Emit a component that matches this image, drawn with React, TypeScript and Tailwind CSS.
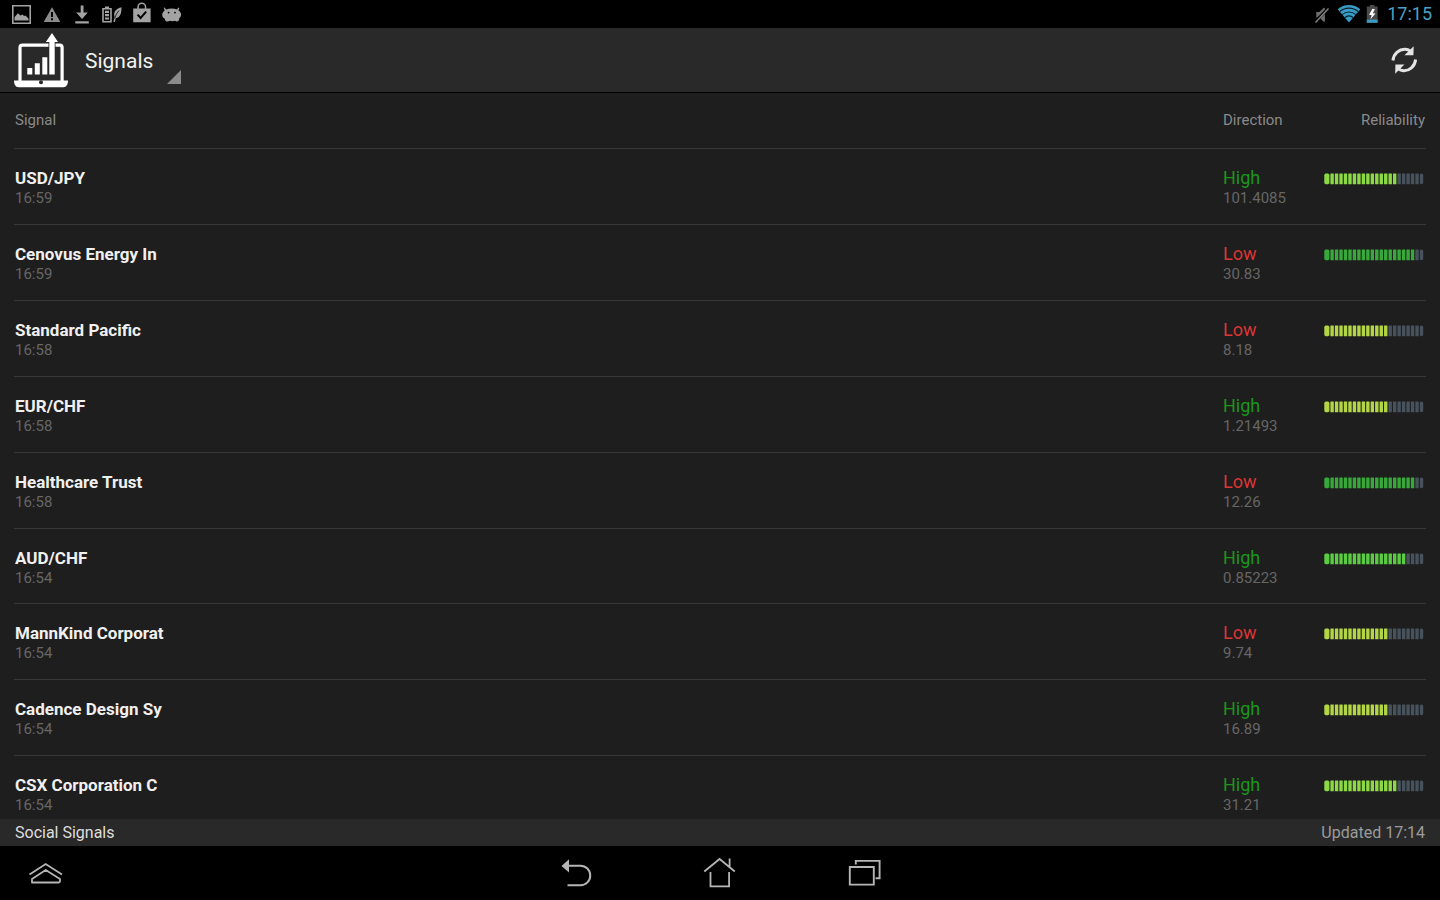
type Tone = 'yellow' | 'lime' | 'bright' | 'green';

type Signal = {
  name: string;
  time: string;
  direction: 'High' | 'Low';
  price: string;
  level: number;
  tone: Tone;
};

const SIGNALS: Signal[] = [
  { name: 'USD/JPY', time: '16:59', direction: 'High', price: '101.4085', level: 16, tone: 'lime' },
  { name: 'Cenovus Energy In', time: '16:59', direction: 'Low', price: '30.83', level: 20, tone: 'green' },
  { name: 'Standard Pacific', time: '16:58', direction: 'Low', price: '8.18', level: 14, tone: 'yellow' },
  { name: 'EUR/CHF', time: '16:58', direction: 'High', price: '1.21493', level: 14, tone: 'yellow' },
  { name: 'Healthcare Trust', time: '16:58', direction: 'Low', price: '12.26', level: 20, tone: 'green' },
  { name: 'AUD/CHF', time: '16:54', direction: 'High', price: '0.85223', level: 18, tone: 'bright' },
  { name: 'MannKind Corporat', time: '16:54', direction: 'Low', price: '9.74', level: 14, tone: 'yellow' },
  { name: 'Cadence Design Sy', time: '16:54', direction: 'High', price: '16.89', level: 14, tone: 'yellow' },
  { name: 'CSX Corporation C', time: '16:54', direction: 'High', price: '31.21', level: 16, tone: 'lime' },
];

const TONES: Record<Tone, string> = {
  yellow: 'fill-[#b4d545]',
  lime: 'fill-[#8cd945]',
  bright: 'fill-[#5acb42]',
  green: 'fill-[#38a83b]',
};

const SEGMENTS = 22;

function Meter({ level, tone }: { level: number; tone: Tone }) {
  return (
    <svg
      className="ml-auto block h-3 w-[101px]"
      viewBox="0 0 101 12"
      role="img"
      aria-label={`Reliability ${level} of ${SEGMENTS}`}
    >
      {Array.from({ length: SEGMENTS }, (_, i) => {
        const edge = i === 0 || i === SEGMENTS - 1;
        const x = i === 0 ? 0.3 : 6.4 + (i - 1) * 4.47;
        return (
          <rect
            key={i}
            x={x}
            y={0.6}
            width={i === 0 ? 5.1 : 3.4}
            height={10.6}
            rx={edge ? 1.6 : 0.3}
            className={i < level ? TONES[tone] : 'fill-[#47525c]'}
          />
        );
      })}
    </svg>
  );
}

function StatusBar() {
  return (
    <div className="flex h-7 shrink-0 items-center justify-between bg-black px-2">
      <svg className="h-7 w-[180px] fill-[#a3a3a3]" viewBox="8 0 180 28" aria-hidden="true">
        <path fillRule="evenodd" d="M12 5h19v19H12zM13.6 6.6v15.8h15.8V6.6z" />
        <path d="M14.5 20.5v-3.2l3.4-4 2.6 2.2 2-1 1.6 1.6 1.4-.6 3 3v2z" />
        <path fillRule="evenodd" d="M52 7.2 60.3 22H43.7zM51 12v5h2v-5zM51 18.3v2h2v-2z" opacity=".85" />
        <path d="M80.7 5.5h2.8v7h4.3L82.1 19l-5.9-6.5h4.5zM75.3 21.2h13.5v2.3H75.3z" />
        <path fillRule="evenodd" d="M105 6.600h4V8h2.800v14.600h-9.600V8h2.800zM103.800 9.600V21h6.400V9.600z" />
        <path d="M105 10.800h4v2.100h-4zM105 14.100h4v2.100h-4zM105 17.400h4v2.100h-4z" />
        <path d="M121.500 7.300c-5 1-8.500 4.600-7 9.600l-1 5h1.400l.9-3.700c4.800-.8 5.700-5.200 5.700-10.900z" />
        <path d="M119 10.500c-2 2.400-3.300 4.500-4.300 8" fill="none" stroke="#000" strokeWidth=".8" />
        <path fillRule="evenodd" d="M133.200 8.400h4.100V7a4.500 4.500 0 0 1 9 0v1.400h4.300v13.800h-17.400zM138.800 8.400h6V7a3 3 0 0 0-6 0z" />
        <path d="m137.600 14.600 3 3.300 5.600-6.300" fill="none" stroke="#000" strokeWidth="2" />
        <path d="M162.200 15c0-2.200 1.300-3.600 2.500-4.600l-1-2.600.9-.4 1.600 2.200c3.300-1.400 7.800-1.400 10.800-.1l1.400-1.900.9.400-.9 2.400c1.800 1 2.600 2.400 2.700 4.100 0 2-.8 3-1.800 3.400.3 3-2 4.400-4.300 2.900-1.500.5-3.300.5-5 0-3 1.700-5.200.3-5.300-2.400-1.600-.4-2.400-1.400-2.500-3.400z" />
        <circle cx="168.600" cy="12.600" r=".9" fill="#000" />
        <circle cx="175" cy="12.600" r=".9" fill="#000" />
      </svg>
      <div className="flex items-center gap-2">
        <svg className="h-7 w-[66px]" viewBox="1314 0 66 28" aria-hidden="true">
          <path d="M1317.300 12h3l4.600-4.300 1 .2v13.600h-1.600l-3.800-4h-3.200z" fill="#6e6e6e" />
          <path d="m1316 22 13.600-14" stroke="#000" strokeWidth="3" />
          <path d="m1316.500 22.500 13-14" stroke="#8a8a8a" strokeWidth="1.300" />
          <path d="M1338.700 9.200a17 17 0 0 1 22.600 0L1350 22.600z" fill="#3a9cc4" />
          <path
            d="M1340.700 11.700a14 14 0 0 1 18.600 0M1343.200 14.600a10.200 10.200 0 0 1 13.600 0M1345.800 17.600a6 6 0 0 1 8.400 0"
            fill="none"
            stroke="#04222e"
            strokeWidth="1.100"
          />
          <path d="M1371 5h4.600v1.600h3V22.800h-10.800V6.600h3.200z" fill="#4a4a4a" />
          <path d="M1367.800 19.600h10.800v3.200h-10.800z" fill="#3a9cc4" />
          <path d="m1373.400 8.800-3.300 6 2.600.5-1.400 4.300 5.200-6-2.700-.4 2.100-4z" fill="#fff" />
        </svg>
        <time className="text-lg leading-7 text-[#4da0c4]">17:15</time>
      </div>
    </div>
  );
}

function AppBar() {
  return (
    <header className="flex h-[65px] shrink-0 items-center justify-between border-b border-black bg-[#292929] pr-[21px] pl-[13px]">
      <div className="flex h-full items-center gap-4">
        <svg className="h-16 w-14" viewBox="13 28 56 64" aria-hidden="true">
          <path
            d="M20 81V47.500a2.400 2.400 0 0 1 2.400-2.400H48.500M55.500 45.100H59.700a2.400 2.400 0 0 1 2.400 2.400V81"
            fill="none"
            stroke="#fff"
            strokeWidth="3.200"
          />
          <path d="M27.300 68h5v6.500h-5zM34.800 63.300h5v11.200h-5zM42.300 57.300h5v17.200h-5z" fill="#fff" />
          <path d="M49.300 74.500V42H45.800L52 33l6 9h-3.300v32.500z" fill="#fff" />
          <path d="M14 80.600h54c0 4-1.700 6.700-4.600 6.700H18.600C15.700 87.300 14 84.600 14 80.600z" fill="#fff" />
          <circle cx="41" cy="82.300" r="2" fill="#292929" />
        </svg>
        <button
          type="button"
          aria-haspopup="menu"
          className="flex h-full w-24 items-end justify-between pb-2 text-[21px] text-[#f2f2f2]"
        >
          <span className="self-center pt-3">Signals</span>
          <svg className="h-[14px] w-[14px] shrink-0" viewBox="0 0 14 14" aria-hidden="true">
            <path d="M14 0v14H0z" fill="#8b8b8b" />
          </svg>
        </button>
      </div>
      <button type="button" aria-label="Refresh">
        <svg className="h-[30px] w-[30px]" viewBox="1389 45 30 30" aria-hidden="true">
          <path
            d="M1393 60.500c.6-7 6.400-11.500 12.200-11.200 2.200.1 3.800.8 5.200 1.800M1415.600 59.500c-.6 7-6.400 11.500-12.200 11.200-2.200-.1-3.800-.8-5.200-1.800"
            fill="none"
            stroke="#e4e4e4"
            strokeWidth="3"
          />
          <path d="m1413.700 46.300-.3 9h-9zM1395.200 73.700l.2-9.200h9z" fill="#e4e4e4" />
        </svg>
      </button>
    </header>
  );
}

function SignalTable() {
  return (
    <main className="min-h-0 flex-1 overflow-hidden px-[14px]">
      <table className="w-full table-fixed border-collapse">
        <colgroup>
          <col />
          <col className="w-[102px]" />
          <col className="w-[102px]" />
        </colgroup>
        <thead>
          <tr className="h-[55px] border-b border-[#373737] text-[15px] leading-5 text-[#8a8a8a]">
            <th scope="col" className="px-px text-left font-normal">Signal</th>
            <th scope="col" className="px-px text-left font-normal">Direction</th>
            <th scope="col" className="px-px text-right font-normal">Reliability</th>
          </tr>
        </thead>
        <tbody>
          {SIGNALS.map((s) => (
            <tr key={s.name} className="h-[76px] border-b border-[#373737] align-top nth-[6n]:h-[75px]">
              <td className="px-px pt-[19px]">
                <div className="text-[17px] leading-5 font-bold text-[#f0f0f0]">{s.name}</div>
                <div className="text-[15px] leading-5 text-[#666666]">{s.time}</div>
              </td>
              <td className="px-px pt-[19px]">
                <div
                  className={
                    s.direction === 'High'
                      ? 'text-lg leading-5 text-[#1c951c]'
                      : 'text-lg leading-5 text-[#dc3535]'
                  }
                >
                  {s.direction}
                </div>
                <div className="text-[15px] leading-5 text-[#666666]">{s.price}</div>
              </td>
              <td className="pt-6 pr-[2px]">
                <Meter level={s.level} tone={s.tone} />
              </td>
            </tr>
          ))}
        </tbody>
      </table>
    </main>
  );
}

function NavBar() {
  const button = 'flex h-[54px] w-12 items-center justify-center';
  return (
    <nav className="grid h-[54px] shrink-0 grid-cols-[1fr_auto_1fr] items-center bg-black px-[22px]">
      <button type="button" aria-label="Expand" className={button}>
        <svg className="h-9 w-9" viewBox="28 855 36 36" fill="none" stroke="#b5b5b5" strokeWidth="1.800" aria-hidden="true">
          <path d="m29.500 874.500 16.200-10.500L62 874.500" />
          <path d="M32 882.500v-3.600l13.700-9 14.300 9v2.600l-1.200 1z" strokeLinejoin="round" />
        </svg>
      </button>
      <div className="flex gap-24">
        <button type="button" aria-label="Back" className={button}>
          <svg className="h-9 w-9" viewBox="558 855 36 36" aria-hidden="true">
            <path d="M568 865.700h12.500a9.700 9.700 0 0 1 0 19.500H567.500" fill="none" stroke="#b5b5b5" strokeWidth="2" />
            <path d="m561.500 866 7.500-6.800v13.400z" fill="#b5b5b5" />
          </svg>
        </button>
        <button type="button" aria-label="Home" className={button}>
          <svg className="h-9 w-9" viewBox="702 855 36 36" fill="none" stroke="#b5b5b5" strokeWidth="1.800" aria-hidden="true">
            <path d="m704.300 871.500 15.300-12.500 15.200 12.500M729.600 867v-8.500" />
            <path d="M710.500 872v14.300h18.600V872" />
          </svg>
        </button>
        <button type="button" aria-label="Recent apps" className={button}>
          <svg className="h-9 w-9" viewBox="846 855 36 36" fill="none" stroke="#b5b5b5" strokeWidth="1.900" aria-hidden="true">
            <path d="M849.800 867h24v17.600h-24zM855.800 864.500v-3.600h23.800v17.400h-4" />
          </svg>
        </button>
      </div>
    </nav>
  );
}

export default function App() {
  return (
    <div className="flex h-screen flex-col overflow-hidden bg-[#1e1e1e] font-[Roboto,sans-serif]">
      <StatusBar />
      <AppBar />
      <SignalTable />
      <footer className="flex h-[27px] shrink-0 items-center justify-between bg-[#292929] px-[15px] pt-px text-base leading-5">
        <span className="text-[#dedede]">Social Signals</span>
        <span className="text-[#9b9b9b]">Updated 17:14</span>
      </footer>
      <NavBar />
    </div>
  );
}
